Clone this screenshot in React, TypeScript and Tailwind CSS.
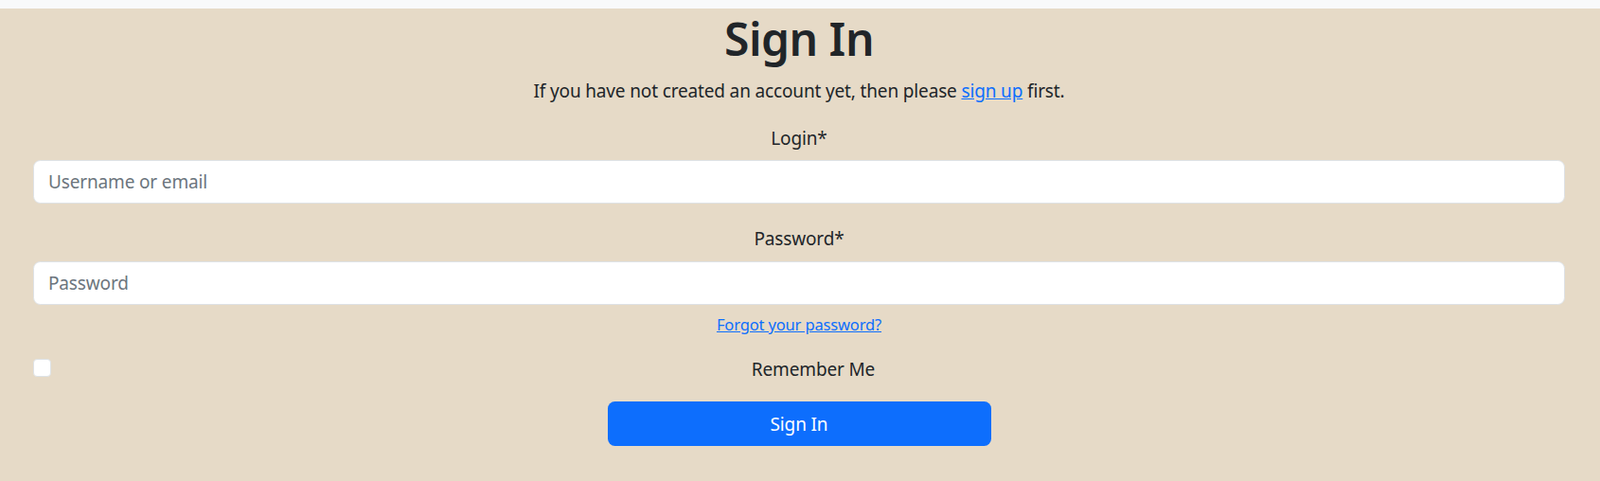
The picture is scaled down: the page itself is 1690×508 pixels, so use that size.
import React from 'react';

const SignIn: React.FC = () => {
  return (
    <div className="min-h-screen bg-[#e6dac7] font-['Noto_Sans',sans-serif] text-[19px] leading-[30px] tracking-[-0.15px] text-[#212529]">
      {/* top strip */}
      <div className="h-[9px] bg-[#f8f9fa]"></div>

      <main className="pl-[35px] pr-[37px] text-center">
        <h1 className="mb-[10px] pt-[2px] text-[48px] font-semibold leading-[60px] tracking-[-0.5px]">Sign In</h1>
        <p className="mb-5">
          If you have not created an account yet, then please{' '}
          <a href="#" className="text-[#0d6efd] underline">sign up</a> first.
        </p>

        <form onSubmit={(e) => e.preventDefault()}>
          <div className="mb-[22px]">
            <label htmlFor="login" className="mb-[8px] block">Login*</label>
            <input
              id="login"
              type="text"
              placeholder="Username or email"
              className="block h-[46px] w-full rounded-[7.5px] border border-[#dee2e6] bg-white px-[15px] text-[19px] outline-none placeholder:text-[#6c757d]"
            />
          </div>

          <div className="mb-[6px]">
            <label htmlFor="password" className="mb-[9px] block">Password*</label>
            <input
              id="password"
              type="password"
              placeholder="Password"
              className="block h-[46px] w-full rounded-[7.5px] border border-[#dee2e6] bg-white px-[15px] text-[19px] outline-none placeholder:text-[#6c757d]"
            />
          </div>

          <div className="mb-[17px] text-[16.5px]">
            <a href="#" className="text-[#0d6efd] underline">Forgot your password?</a>
          </div>

          <div className="mb-[19px] flex items-start">
            <span className="mt-[4px] block h-[19px] w-[19px] shrink-0 rounded-[4px] border border-[#dee2e6] bg-white"></span>
            <label className="ml-[11px] flex-1">Remember Me</label>
          </div>

          <button
            type="submit"
            className="mx-auto block h-[47px] w-[405px] rounded-[7.5px] bg-[#0d6efd] text-[19px] text-white"
          >
            Sign In
          </button>
        </form>
      </main>
    </div>
  );
};

export default function App() {
  return <SignIn />;
}
